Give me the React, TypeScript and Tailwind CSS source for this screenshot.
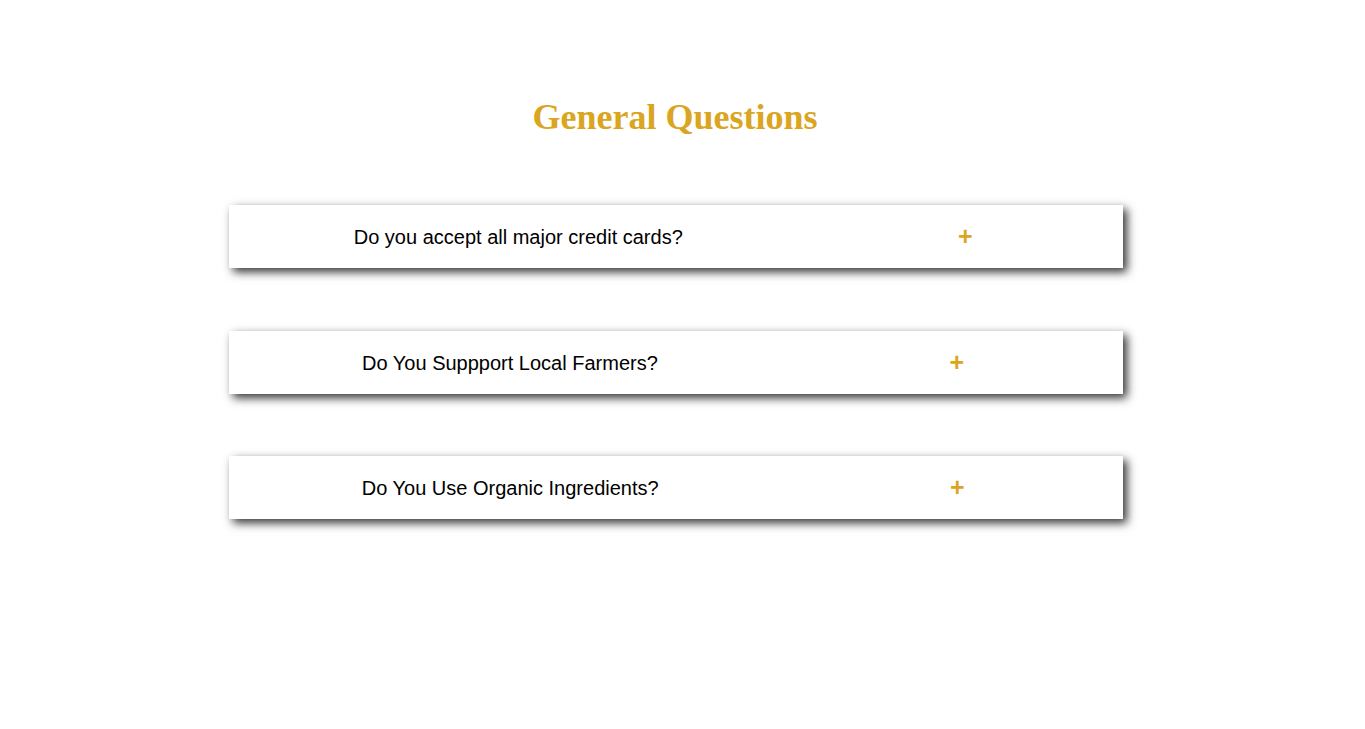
import React from 'react'

const questions = [
  'Do you accept all major credit cards?',
  'Do You Suppport Local Farmers?',
  'Do You Use Organic Ingredients?',
]

const FaqItem: React.FC<{ q: string; className?: string }> = ({ q, className }) => (
  <div
    className={`flex h-[63px] w-[894px] items-center justify-around bg-white shadow-[4px_4px_9px_rgba(0,0,0,0.8)] ${className ?? ''}`}
  >
    <span className="text-[20px] text-black">{q}</span>
    <span className="w-[66px] text-center text-[25px] font-bold leading-none text-[#daa520]">+</span>
  </div>
)

const App: React.FC = () => {
  return (
    <div className="min-h-screen w-[1350px] bg-white font-['Liberation_Sans',Arial,sans-serif]">
      <h1 className="pt-[97px] text-center font-['Liberation_Serif','Times_New_Roman',serif] text-[36px] font-bold leading-[41px] text-[#daa520]">
        General Questions
      </h1>
      <div className="mt-[67px] flex flex-col pl-[229px]">
        <FaqItem q={questions[0]} />
        <FaqItem q={questions[1]} className="mt-[63px]" />
        <FaqItem q={questions[2]} className="mt-[62px]" />
      </div>
    </div>
  )
}

export default App
